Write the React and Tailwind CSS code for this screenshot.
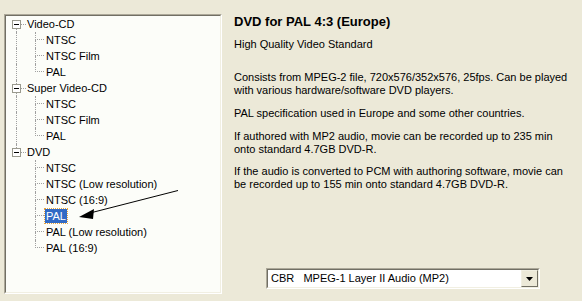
const tree = [
  { label: 'Video-CD', children: ['NTSC', 'NTSC Film', 'PAL'] },
  { label: 'Super Video-CD', children: ['NTSC', 'NTSC Film', 'PAL'] },
  {
    label: 'DVD',
    children: ['NTSC', 'NTSC (Low resolution)', 'NTSC (16:9)', 'PAL', 'PAL (Low resolution)', 'PAL (16:9)'],
  },
];

const dot = 'border-dotted border-[#a0a0a0]';

function RootRow({ label, above, below }) {
  return (
    <div className="flex h-4 items-stretch">
      <div className="w-[6px]" />
      <div className="flex w-[9px] flex-col items-center">
        <div className={`w-0 flex-1 ${above ? `border-l ${dot}` : ''}`} />
        <div className="flex h-[9px] w-[9px] items-center justify-center border border-[#9a9a8e] bg-white">
          <div className="h-px w-[5px] bg-black" />
        </div>
        <div className={`w-0 flex-1 ${below ? `border-l ${dot}` : ''}`} />
      </div>
      <div className={`w-[5px] self-center border-t ${dot} mt-px`} />
      <span className="px-[1px] leading-4">{label}</span>
    </div>
  );
}

function ChildRow({ label, rootLine, last, selected }) {
  return (
    <div className="flex h-4 items-stretch">
      <div className="w-[6px]" />
      <div className="flex w-[9px] justify-center">
        <div className={`w-0 ${rootLine ? `border-l ${dot}` : ''}`} />
      </div>
      <div className="w-[14px]" />
      <div className="flex w-[9px] flex-col">
        <div className={`h-2 border-l border-b ${dot}`} />
        <div className={`h-2 ${last ? '' : `border-l ${dot}`}`} />
      </div>
      <span
        className={`ml-[1px] px-[1px] leading-[14px] my-px ${
          selected ? 'bg-[#316ac5] text-white outline-1 outline-dotted outline-[#e8a33a]' : ''
        }`}
      >
        {label}
      </span>
    </div>
  );
}

export default function App() {
  return (
    <div
      className="relative flex h-[301px] w-[582px] bg-[#ece9d8] pl-[4px] pt-[14px] text-[11px] text-black"
      style={{ fontFamily: '"Liberation Sans", Arial, sans-serif' }}
    >
      <div className="h-[280px] w-[218px] border border-t-[#aca899] border-l-[#aca899] border-b-white border-r-white">
        <div className="h-full w-full border border-t-[#716f64] border-l-[#716f64] border-b-[#f1efe2] border-r-[#f1efe2] bg-[#fcfdf9]">
          {tree.map((node, i) => (
            <div key={node.label}>
              <RootRow label={node.label} above={i > 0} below={i < tree.length - 1} />
              {node.children.map((c, j) => (
                <ChildRow
                  key={c + j}
                  label={c}
                  rootLine={i < tree.length - 1}
                  last={j === node.children.length - 1}
                  selected={node.label === 'DVD' && c === 'PAL'}
                />
              ))}
            </div>
          ))}
        </div>
      </div>

      <div className="ml-[12px] flex flex-1 flex-col pr-2">
        <h1 className="text-[13px] font-bold leading-4">DVD for PAL 4:3 (Europe)</h1>
        <div className="mt-[8px] leading-[13px]">
          <p>High Quality Video Standard</p>
          <p className="mt-[20px]">
            Consists from MPEG-2 file, 720x576/352x576, 25fps. Can be played
            <br />
            with various hardware/software DVD players.
          </p>
          <p className="mt-[10px]">PAL specification used in Europe and some other countries.</p>
          <p className="mt-[10px]">
            If authored with MP2 audio, movie can be recorded up to 235 min
            <br />
            onto standard 4.7GB DVD-R.
          </p>
          <p className="mt-[9px]">
            If the audio is converted to PCM with authoring software, movie can
            <br />
            be recorded up to 155 min onto standard 4.7GB DVD-R.
          </p>
        </div>

        <div className="ml-[32px] mt-[77px] flex h-[21px] w-[274px] border border-t-[#aca899] border-l-[#aca899] border-b-white border-r-white">
          <div className="flex flex-1 border border-t-[#716f64] border-l-[#716f64] border-b-[#f1efe2] border-r-[#f1efe2] bg-white">
            <span className="flex-1 pl-[3px] leading-[17px]">CBR&nbsp;&nbsp;&nbsp;MPEG-1 Layer II Audio (MP2)</span>
            <div className="flex w-[17px] items-center justify-center border border-t-[#f1efe2] border-l-[#f1efe2] border-b-[#716f64] border-r-[#716f64] bg-[#ece9d8]">
              <svg width="7" height="4" viewBox="0 0 7 4">
                <path d="M0 0h7L3.5 4z" fill="#000" />
              </svg>
            </div>
          </div>
        </div>
      </div>

      <svg className="pointer-events-none absolute left-0 top-0" width="582" height="301">
        <line x1="178" y1="190.5" x2="90" y2="213" stroke="#000" strokeWidth="1" />
        <path d="M79 217L94 209L93 219z" fill="#000" />
      </svg>
    </div>
  );
}
